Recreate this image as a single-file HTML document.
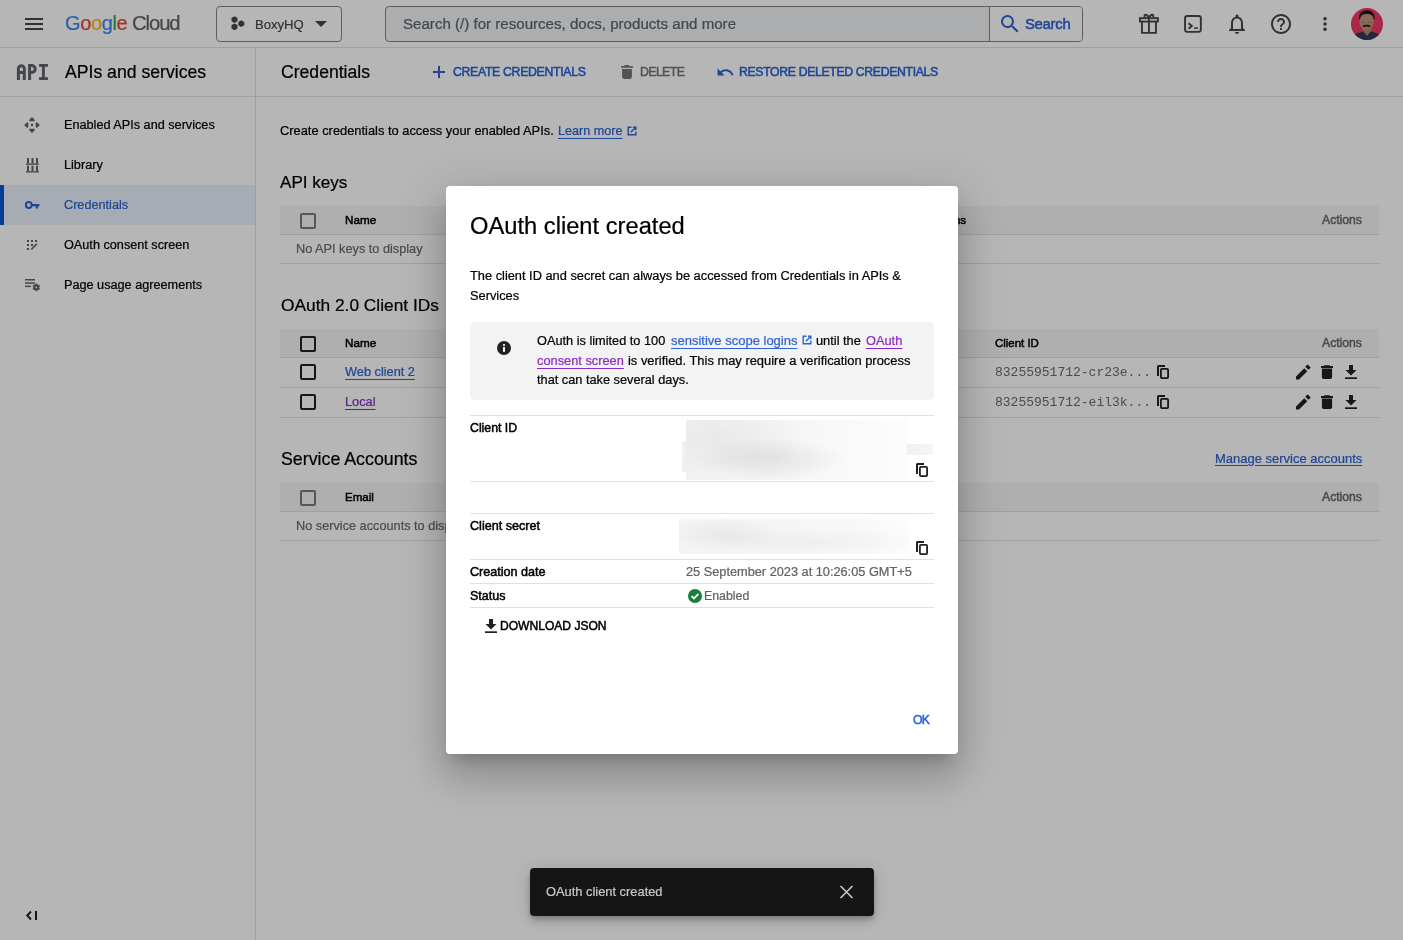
<!DOCTYPE html>
<html><head><meta charset="utf-8">
<style>
*{box-sizing:border-box;margin:0;padding:0}
html,body{width:1403px;height:940px;overflow:hidden;background:#fff;font-family:"Liberation Sans",sans-serif;color:#202124;position:relative}
.a{will-change:transform}
.n{-webkit-text-stroke:0.22px currentColor}
.m{-webkit-text-stroke:0.5px currentColor}
.a{position:absolute;white-space:nowrap}
svg.a{display:block;overflow:visible}
#ov{position:absolute;left:0;top:0;width:1403px;height:940px;background:rgba(0,0,0,0.285)}
</style></head><body>
<div class="a" style="left:0px;top:47px;width:1403px;height:1px;background:#e0e0e0;"></div>
<svg class="a" style="left:22px;top:12px;" width="24" height="24" viewBox="0 0 24 24"><path fill="#474747" d="M3 18h18v-2H3v2zm0-5h18v-2H3v2zm0-7v2h18V6H3z"/></svg>
<div class="a n" style="top:13.00px;font-size:20px;line-height:20px;color:#000;letter-spacing:-0.4px;left:65.30px;"><span style="color:#4285f4">G</span><span style="color:#ea4335">o</span><span style="color:#fbbc04">o</span><span style="color:#4285f4">g</span><span style="color:#34a853">l</span><span style="color:#ea4335">e</span></div>
<div class="a n" style="top:13.00px;font-size:20.3px;line-height:20.3px;color:#5f6368;letter-spacing:-1.1px;left:132.20px;">Cloud</div>
<div class="a" style="left:216px;top:6px;width:126px;height:36px;background:transparent;box-sizing:border-box;border:1px solid #80868b;border-radius:4px"></div>
<svg class="a" style="left:230px;top:15px;" width="16" height="16" viewBox="0 0 16 16"><g fill="#474747"><path d="M4.5 1.2l3 1.7v3.4l-3 1.7-3-1.7V2.9z"/><path d="M11.3 5.2l3 1.7v3.4l-3 1.7-3-1.7V6.9z"/><path d="M4.5 8.4l3 1.7v3.4l-3 1.7-3-1.7v-3.4z"/></g></svg>
<div class="a n" style="top:18.00px;font-size:13.05px;line-height:13.05px;color:#474747;left:255.40px;">BoxyHQ</div>
<svg class="a" style="left:315px;top:21px;" width="12" height="6" viewBox="0 0 12 6"><path d="M0 0h12L6 6z" fill="#474747"/></svg>
<div class="a" style="left:385px;top:6px;width:698px;height:36px;background:#f1f3f4;box-sizing:border-box;border:1px solid #80868b;border-radius:4px"></div>
<div class="a" style="left:989px;top:7px;width:93px;height:34px;background:#fff;border-left:1px solid #80868b;border-radius:0 3px 3px 0;box-sizing:border-box"></div>
<div class="a n" style="top:16.00px;font-size:15.1px;line-height:15.1px;color:#5f6368;left:403.00px;">Search (/) for resources, docs, products and more</div>
<svg class="a" style="left:998px;top:12px;" width="24" height="24" viewBox="0 0 24 24"><path fill="#2a62d2" d="M15.5 14h-.79l-.28-.27A6.471 6.471 0 0 0 16 9.5 6.5 6.5 0 1 0 9.5 16c1.61 0 3.09-.59 4.23-1.57l.27.28v.79l5 4.99L20.49 19l-4.99-5zm-6 0C7.01 14 5 11.99 5 9.5S7.01 5 9.5 5 14 7.01 14 9.5 11.99 14 9.5 14z"/></svg>
<div class="a m" style="top:17.00px;font-size:14.8px;line-height:14.8px;color:#2a62d2;letter-spacing:-0.25px;left:1024.60px;">Search</div>
<svg class="a" style="left:1134px;top:8px;" width="30" height="30" viewBox="0 0 30 30"><g fill="none" stroke="#474747" stroke-width="1.9"><rect x="5.95" y="10.15" width="17.9" height="3.4"/><path d="M7.95 13.5V24.85h14V13.5M14.95 10v14.8"/><path d="M14.95 10.1C13.2 5.5 9.6 5.8 10.7 9.6M14.95 10.1C16.7 5.5 20.3 5.8 19.2 9.6"/></g></svg>
<svg class="a" style="left:1134px;top:8px;" width="70" height="30" viewBox="0 0 70 30"><rect x="51.05" y="8.05" width="15.8" height="15.8" rx="2.3" fill="none" stroke="#474747" stroke-width="1.9"/><path d="M54.6 15.3l3.2 2.7-3.2 2.7" fill="none" stroke="#474747" stroke-width="1.9"/><rect x="60.1" y="19.3" width="3.7" height="1.6" fill="#474747"/></svg>
<svg class="a" style="left:1225px;top:12px;" width="24" height="24" viewBox="0 0 24 24"><path fill="#474747" d="M12 22c1.1 0 2-.9 2-2h-4c0 1.1.9 2 2 2zm6-6v-5c0-3.07-1.64-5.64-4.5-6.32V4c0-.83-.67-1.5-1.5-1.5s-1.5.67-1.5 1.5v.68C7.63 5.36 6 7.92 6 11v5l-2 2v1h16v-1l-2-2zm-2 1H8v-6c0-2.48 1.51-4.5 4-4.5s4 2.02 4 4.5v6z"/></svg>
<svg class="a" style="left:1269px;top:12px;" width="24" height="24" viewBox="0 0 24 24"><path fill="#474747" d="M11 18h2v-2h-2v2zm1-16C6.48 2 2 6.48 2 12s4.48 10 10 10 10-4.48 10-10S17.52 2 12 2zm0 18c-4.41 0-8-3.59-8-8s3.59-8 8-8 8 3.59 8 8-3.59 8-8 8zm0-14c-2.21 0-4 1.79-4 4h2c0-1.1.9-2 2-2s2 .9 2 2c0 2-3 1.75-3 5h2c0-2.25 3-2.5 3-5 0-2.21-1.79-4-4-4z"/></svg>
<svg class="a" style="left:1313px;top:12px;" width="24" height="24" viewBox="0 0 24 24"><g fill="#474747"><circle cx="12" cy="6.8" r="1.8"/><circle cx="12" cy="12" r="1.8"/><circle cx="12" cy="17.2" r="1.8"/></g></svg>
<svg class="a" style="left:1351px;top:8px;" width="32" height="32" viewBox="0 0 32 32"><defs><clipPath id="cav"><circle cx="16" cy="16" r="16"/></clipPath></defs><g clip-path="url(#cav)"><rect width="32" height="32" fill="#f23866"/><path d="M12 19h8l1 5-5 5-5-5z" fill="#b88a72"/><ellipse cx="15.6" cy="12.8" rx="7.3" ry="9.6" fill="#c2967e"/><path d="M8 11.5C7.6 5 10.8 2.2 15.8 2.2S24 5 23.6 11.5l-1.1-.6c-.3-3-2.2-4.8-6.6-4.8s-6.4 1.8-6.7 4.8z" fill="#1d1816"/><path d="M11.6 17.8c1.8-1.3 6.4-1.3 8 0l-.4 1.4c-1.8-.8-5.5-.8-7.2 0z" fill="#261c18"/><path d="M10.5 14.5h3.2M17.6 14.5h3.2" stroke="#8a6d60" stroke-width="0.8"/><path d="M1 33c0-5 4-8 8-8.5l3-1.5 4 5 4-5 3 1.5c4 .5 8 3.5 8 8.5z" fill="#303a52"/></g></svg>
<div class="a" style="left:0px;top:96px;width:1403px;height:1px;background:#e0e0e0;"></div>
<div class="a" style="left:255px;top:48px;width:1px;height:892px;background:#e0e0e0;"></div>
<svg class="a" style="left:0px;top:0px;" width="60" height="90" viewBox="0 0 60 90"><g fill="none" stroke="#5f6368" stroke-width="3"><path d="M18.4 80V68.6a2.95 2.95 0 0 1 5.9 0V80M18.4 72.5h5.9"/><path d="M29.6 80V65.5h2.1a3.5 3.5 0 0 1 0 7h-2.1"/></g><g fill="#5f6368"><rect x="39.1" y="64" width="8.8" height="2.8"/><rect x="42" y="64" width="2.8" height="16"/><rect x="39.1" y="77.2" width="8.8" height="2.8"/></g></svg>
<div class="a n" style="top:64.00px;font-size:17.64px;line-height:17.64px;color:#000;left:64.50px;">APIs and services</div>
<div class="a n" style="top:64.00px;font-size:17.6px;line-height:17.6px;color:#000;left:280.70px;">Credentials</div>
<svg class="a" style="left:433px;top:66px;" width="12" height="12" viewBox="0 0 12 12"><path d="M5 0h2v5h5v2H7v5H5V7H0V5h5z" fill="#2a62d2"/></svg>
<div class="a m" style="top:66.00px;font-size:12.3px;line-height:12.3px;color:#2a62d2;letter-spacing:-0.33px;left:452.50px;">CREATE CREDENTIALS</div>
<svg class="a" style="left:612px;top:60px;" width="30" height="24" viewBox="0 0 30 24"><g fill="#757575"><path d="M12.4 5h4.6v1.2h-4.6z"/><rect x="9.1" y="6.1" width="11.8" height="1.7"/><path d="M10.1 9.1h9.8v7.6c0 1.2-1 2.2-2.2 2.2h-5.4c-1.2 0-2.2-1-2.2-2.2z"/></g></svg>
<div class="a m" style="top:66.00px;font-size:12.3px;line-height:12.3px;color:#757575;letter-spacing:-0.6px;left:639.70px;">DELETE</div>
<svg class="a" style="left:716.4px;top:62.5px;" width="18.75" height="18.75" viewBox="0 0 24 24"><path fill="#2a62d2" d="M12.5 8c-2.65 0-5.05.99-6.9 2.6L2 7v9h9l-3.62-3.62c1.39-1.160 3.16-1.88 5.12-1.88 3.54 0 6.55 2.31 7.6 5.5l2.37-.78C21.08 11.03 17.15 8 12.5 8z"/></svg>
<div class="a m" style="top:66.00px;font-size:12.3px;line-height:12.3px;color:#2a62d2;letter-spacing:-0.37px;left:738.90px;">RESTORE DELETED CREDENTIALS</div>
<div class="a" style="left:0px;top:185px;width:255px;height:40px;background:#ebf0fc;"></div>
<div class="a" style="left:0px;top:185px;width:4px;height:40px;background:#0b57d0;"></div>
<svg class="a" style="left:24px;top:117px;" width="16" height="16" viewBox="0 0 16 16"><g fill="#5f6368"><path id="chv" d="M8 0.1L11.1 3.3 9.6 4.6 8 3.9 6.4 4.6 4.9 3.3z"/><use href="#chv" transform="rotate(90 8 8)"/><use href="#chv" transform="rotate(180 8 8)"/><use href="#chv" transform="rotate(270 8 8)"/><circle cx="8" cy="8" r="1.25"/></g></svg>
<svg class="a" style="left:26px;top:158px;" width="13" height="15" viewBox="0 0 13 15"><g fill="#5f6368"><rect x="1" y="0" width="2" height="5.5"/><rect x="5.5" y="0" width="2" height="5.5"/><rect x="10" y="0" width="2" height="5.5"/><rect x="0" y="5.5" width="13" height="1.3"/><rect x="1" y="7.7" width="2" height="5.5"/><rect x="5.5" y="7.7" width="2" height="5.5"/><rect x="10" y="7.7" width="2" height="5.5"/><rect x="0" y="13.2" width="13" height="1.3"/></g></svg>
<svg class="a" style="left:24px;top:199px;" width="16" height="12" viewBox="0 0 16 12"><circle cx="4.8" cy="6" r="2.9" fill="none" stroke="#2a62d2" stroke-width="2"/><path d="M7.5 5h8v2.2h-1.6v2.2h-2.2V7.2H7.5z" fill="#2a62d2"/></svg>
<svg class="a" style="left:26px;top:239px;" width="12" height="12" viewBox="0 0 12 12"><g fill="#5f6368"><rect x="1" y="1" width="2" height="2"/><rect x="5" y="1" width="2" height="2"/><rect x="9" y="1" width="2" height="2"/><rect x="1" y="5" width="2" height="2"/><rect x="5" y="5" width="2" height="2"/><rect x="1" y="9" width="2" height="2"/><path d="M10.3 4.3l1.1 1.1-5.5 5.5-1.1-1.1z"/></g></svg>
<svg class="a" style="left:24px;top:278px;" width="17" height="14" viewBox="0 0 17 14"><g fill="#5f6368"><rect x="1" y="1" width="10" height="1.5"/><rect x="1" y="4.3" width="10" height="1.5"/><rect x="1" y="7.6" width="6" height="1.5"/></g><g transform="translate(12.3 9.3)"><circle r="2.3" fill="none" stroke="#5f6368" stroke-width="1.6"/><g fill="#5f6368"><rect x="-0.8" y="-3.8" width="1.6" height="7.6"/><rect x="-0.8" y="-3.8" width="1.6" height="7.6" transform="rotate(60)"/><rect x="-0.8" y="-3.8" width="1.6" height="7.6" transform="rotate(120)"/></g><circle r="0.9" fill="#fff"/></g></svg>
<div class="a n" style="top:119.00px;font-size:12.68px;line-height:12.68px;color:#000;left:64.40px;">Enabled APIs and services</div>
<div class="a n" style="top:159.00px;font-size:12.68px;line-height:12.68px;color:#000;left:64.40px;">Library</div>
<div class="a n" style="top:199.00px;font-size:12.68px;line-height:12.68px;color:#2a62d2;left:64.40px;">Credentials</div>
<div class="a n" style="top:239.00px;font-size:12.68px;line-height:12.68px;color:#000;left:64.40px;">OAuth consent screen</div>
<div class="a n" style="top:279.00px;font-size:12.68px;line-height:12.68px;color:#000;left:64.40px;">Page usage agreements</div>
<svg class="a" style="left:26px;top:909px;" width="12" height="13" viewBox="0 0 12 13"><path d="M5 2.5L1.2 6.5 5 10.5" fill="none" stroke="#202124" stroke-width="1.9"/><rect x="9" y="2" width="2" height="9" fill="#202124"/></svg>
<div class="a n" style="top:125.00px;font-size:12.86px;line-height:12.86px;color:#000;left:280.30px;">Create credentials to access your enabled APIs.</div>
<div class="a n" style="top:125.00px;font-size:12.63px;line-height:12.63px;color:#2a62d2;left:558.00px;text-decoration:underline;text-underline-offset:3px">Learn more</div>
<svg class="a" style="left:626px;top:125px;" width="12" height="12" viewBox="0 0 12 12"><path d="M1.5 1.5h4v1.4H2.9v6.2h6.2V6.5h1.4v4H1.5z" fill="#2a62d2"/><path d="M7 1.5h3.5V5H9.1V3.9L5.3 7.7l-1-1 3.8-3.8H7z" fill="#2a62d2"/></svg>
<div class="a n" style="top:174.00px;font-size:17.08px;line-height:17.08px;color:#000;left:280.30px;">API keys</div>
<div class="a" style="left:280px;top:206px;width:1099px;height:28px;background:#f5f5f5;"></div>
<div class="a" style="left:280px;top:234px;width:1099px;height:1px;background:#e0e0e0;"></div>
<div class="a" style="left:280px;top:263px;width:1099px;height:1px;background:#e0e0e0;"></div>
<div class="a" style="left:300px;top:213px;width:16px;height:16px;background:transparent;box-sizing:border-box;border:2px solid #7a7a7a;border-radius:2px"></div>
<div class="a m" style="top:214.00px;font-size:11.7px;line-height:11.7px;color:#000;left:344.50px;">Name</div>
<div class="a m" style="top:215.00px;font-size:11.5px;line-height:11.5px;color:#000;right:437.00px;">Restrictions</div>
<div class="a m" style="top:214.00px;font-size:12.2px;line-height:12.2px;color:#6b6b6b;right:40.60px;">Actions</div>
<div class="a n" style="top:243.00px;font-size:12.73px;line-height:12.73px;color:#6b6b6b;left:296.40px;">No API keys to display</div>
<div class="a n" style="top:297.00px;font-size:17.34px;line-height:17.34px;color:#000;left:280.70px;">OAuth 2.0 Client IDs</div>
<div class="a" style="left:280px;top:329px;width:1099px;height:28px;background:#f5f5f5;"></div>
<div class="a" style="left:280px;top:357px;width:1099px;height:1px;background:#e0e0e0;"></div>
<div class="a" style="left:280px;top:387px;width:1099px;height:1px;background:#e0e0e0;"></div>
<div class="a" style="left:280px;top:417px;width:1099px;height:1px;background:#e0e0e0;"></div>
<div class="a" style="left:300px;top:336px;width:16px;height:16px;background:transparent;box-sizing:border-box;border:2px solid #202124;border-radius:2px"></div>
<div class="a" style="left:300px;top:364px;width:16px;height:16px;background:transparent;box-sizing:border-box;border:2px solid #202124;border-radius:2px"></div>
<div class="a" style="left:300px;top:394px;width:16px;height:16px;background:transparent;box-sizing:border-box;border:2px solid #202124;border-radius:2px"></div>
<div class="a m" style="top:337.00px;font-size:11.7px;line-height:11.7px;color:#000;left:344.50px;">Name</div>
<div class="a m" style="top:338.00px;font-size:11.45px;line-height:11.45px;color:#000;left:995.30px;">Client ID</div>
<div class="a m" style="top:337.00px;font-size:12.2px;line-height:12.2px;color:#6b6b6b;right:40.60px;">Actions</div>
<div class="a n" style="top:366.00px;font-size:12.76px;line-height:12.76px;color:#2a62d2;left:344.50px;text-decoration:underline;text-underline-offset:3px">Web client 2</div>
<div class="a n" style="top:396.00px;font-size:12.76px;line-height:12.76px;color:#8a2bc2;left:344.50px;text-decoration:underline;text-underline-offset:3px">Local</div>
<div class="a" style="top:366.00px;font-size:13.0px;line-height:13.0px;color:#6b6b6b;font-family:'Liberation Mono',monospace;left:995.30px;">83255951712-cr23e...</div>
<div class="a" style="top:396.00px;font-size:13.0px;line-height:13.0px;color:#6b6b6b;font-family:'Liberation Mono',monospace;left:995.30px;">83255951712-eil3k...</div>
<svg class="a" style="left:1156px;top:365px;" width="13" height="14" viewBox="0 0 13 14"><path d="M1 1.5C1 .7 1.7 0 2.5 0H9v2H3v9H1z" fill="#202124"/><rect x="4.9" y="3.9" width="7.2" height="9.2" rx="1" fill="none" stroke="#202124" stroke-width="1.8"/></svg>
<svg class="a" style="left:1156px;top:395px;" width="13" height="14" viewBox="0 0 13 14"><path d="M1 1.5C1 .7 1.7 0 2.5 0H9v2H3v9H1z" fill="#202124"/><rect x="4.9" y="3.9" width="7.2" height="9.2" rx="1" fill="none" stroke="#202124" stroke-width="1.8"/></svg>
<svg class="a" style="left:1296px;top:365px;" width="15" height="15" viewBox="0 0 15 15"><path d="M0 11.5V14.5h3L11.3 6.2l-3-3zM14.2 3.3c.4-.4.4-1 0-1.4L12.3.1c-.4-.4-1-.4-1.4 0L9.3 1.7l3 3z" fill="#202124"/></svg>
<svg class="a" style="left:1321px;top:365px;" width="12" height="14" viewBox="0 0 12 14"><path d="M3.5 0.3h5l.8.8H12v1.8H0V1.1h2.7z" fill="#202124"/><path d="M.9 3.6h10.2v8.3c0 1.2-.9 2.1-2.1 2.1H3c-1.2 0-2.1-.9-2.1-2.1z" fill="#202124"/></svg>
<svg class="a" style="left:1345px;top:365px;" width="12" height="14" viewBox="0 0 12 14"><path d="M4 0h4v5h3.5L6 10.5.5 5H4z" fill="#202124"/><rect x="0" y="12.3" width="12" height="1.7" fill="#202124"/></svg>
<svg class="a" style="left:1296px;top:394.7px;" width="15" height="15" viewBox="0 0 15 15"><path d="M0 11.5V14.5h3L11.3 6.2l-3-3zM14.2 3.3c.4-.4.4-1 0-1.4L12.3.1c-.4-.4-1-.4-1.4 0L9.3 1.7l3 3z" fill="#202124"/></svg>
<svg class="a" style="left:1321px;top:394.7px;" width="12" height="14" viewBox="0 0 12 14"><path d="M3.5 0.3h5l.8.8H12v1.8H0V1.1h2.7z" fill="#202124"/><path d="M.9 3.6h10.2v8.3c0 1.2-.9 2.1-2.1 2.1H3c-1.2 0-2.1-.9-2.1-2.1z" fill="#202124"/></svg>
<svg class="a" style="left:1345px;top:394.7px;" width="12" height="14" viewBox="0 0 12 14"><path d="M4 0h4v5h3.5L6 10.5.5 5H4z" fill="#202124"/><rect x="0" y="12.3" width="12" height="1.7" fill="#202124"/></svg>
<div class="a n" style="top:451.00px;font-size:17.8px;line-height:17.8px;color:#000;left:280.50px;">Service Accounts</div>
<div class="a n" style="top:452.00px;font-size:12.99px;line-height:12.99px;color:#2a62d2;right:40.30px;text-decoration:underline;text-underline-offset:2px">Manage service accounts</div>
<div class="a" style="left:280px;top:483px;width:1099px;height:28px;background:#f5f5f5;"></div>
<div class="a" style="left:280px;top:511px;width:1099px;height:1px;background:#e0e0e0;"></div>
<div class="a" style="left:280px;top:540px;width:1099px;height:1px;background:#e0e0e0;"></div>
<div class="a" style="left:300px;top:490px;width:16px;height:16px;background:transparent;box-sizing:border-box;border:2px solid #7a7a7a;border-radius:2px"></div>
<div class="a m" style="top:492.00px;font-size:11.56px;line-height:11.56px;color:#000;left:344.50px;">Email</div>
<div class="a m" style="top:491.00px;font-size:12.2px;line-height:12.2px;color:#6b6b6b;right:40.60px;">Actions</div>
<div class="a n" style="top:520.00px;font-size:12.73px;line-height:12.73px;color:#6b6b6b;left:296.40px;">No service accounts to display</div>
<div id="ov"></div>
<div class="a" style="left:446px;top:186px;width:512px;height:568px;background:#fff;border-radius:4px;box-shadow:0 11px 15px -7px rgba(0,0,0,.2),0 24px 38px 3px rgba(0,0,0,.14),0 9px 46px 8px rgba(0,0,0,.12)"></div>
<div class="a n" style="top:215.00px;font-size:23.71px;line-height:23.71px;color:#000;left:470.20px;">OAuth client created</div>
<div class="a n" style="top:270.00px;font-size:12.82px;line-height:12.82px;color:#000;left:470.20px;">The client ID and secret can always be accessed from Credentials in APIs &amp;</div>
<div class="a n" style="top:290.00px;font-size:12.82px;line-height:12.82px;color:#000;left:470.20px;">Services</div>
<div class="a" style="left:470px;top:322px;width:464px;height:78px;background:#f3f3f3;border-radius:5px"></div>
<svg class="a" style="left:497px;top:341px;" width="14" height="14" viewBox="0 0 14 14"><circle cx="7" cy="7" r="7" fill="#202124"/><rect x="6" y="6" width="2" height="4.8" fill="#fff"/><circle cx="7" cy="4" r="1.1" fill="#fff"/></svg>
<div class="a n" style="top:335.00px;font-size:12.75px;line-height:12.75px;color:#000;left:537.00px;">OAuth is limited to 100 </div>
<div class="a n" style="top:334.00px;font-size:13.0px;line-height:13.0px;color:#2d63d8;left:671.00px;text-decoration:underline;text-underline-offset:3px">sensitive scope logins</div>
<svg class="a" style="left:801px;top:334px;" width="12" height="12" viewBox="0 0 12 12"><path d="M1.5 1.5h4v1.4H2.9v6.2h6.2V6.5h1.4v4H1.5z" fill="#2d63d8"/><path d="M7 1.5h3.5V5H9.1V3.9L5.3 7.7l-1-1 3.8-3.8H7z" fill="#2d63d8"/></svg>
<div class="a n" style="top:335.00px;font-size:12.8px;line-height:12.8px;color:#000;left:816.30px;">until the</div>
<div class="a n" style="top:335.00px;font-size:12.8px;line-height:12.8px;color:#8a2bc2;left:866.00px;text-decoration:underline;text-underline-offset:3px">OAuth</div>
<div class="a n" style="top:355.00px;font-size:12.8px;line-height:12.8px;color:#8a2bc2;left:537.00px;text-decoration:underline;text-underline-offset:3px">consent screen</div>
<div class="a n" style="top:355.00px;font-size:12.92px;line-height:12.92px;color:#000;left:628.00px;">is verified. This may require a verification process</div>
<div class="a n" style="top:374.00px;font-size:12.75px;line-height:12.75px;color:#000;left:537.00px;">that can take several days.</div>
<div class="a" style="left:470px;top:415px;width:464px;height:1px;background:#e0e0e0;"></div>
<div class="a" style="left:470px;top:481px;width:464px;height:1px;background:#e0e0e0;"></div>
<div class="a" style="left:470px;top:513px;width:464px;height:1px;background:#e0e0e0;"></div>
<div class="a" style="left:470px;top:559px;width:464px;height:1px;background:#e0e0e0;"></div>
<div class="a" style="left:470px;top:583px;width:464px;height:1px;background:#e0e0e0;"></div>
<div class="a" style="left:470px;top:607px;width:464px;height:1px;background:#e0e0e0;"></div>
<div class="a m" style="top:422.00px;font-size:12.3px;line-height:12.3px;color:#000;left:470.00px;">Client ID</div>
<div class="a" style="left:682px;top:441px;width:5px;height:31px;background:linear-gradient(90deg,#f3f3f3,#ececec);"></div>
<div class="a" style="left:907px;top:444px;width:26px;height:11px;background:linear-gradient(90deg,#f0f0f0,#f6f6f6);"></div>
<div class="a" style="left:686px;top:420px;width:221px;height:60px;background:radial-gradient(ellipse 35% 35% at 38% 65%,rgba(0,0,0,.07) 0%,rgba(0,0,0,.04) 50%,rgba(0,0,0,0) 100%),radial-gradient(ellipse 40% 60% at 15% 30%,rgba(0,0,0,.04) 0%,rgba(0,0,0,0) 100%),linear-gradient(90deg,#f1f1f1 0%,#f4f4f4 40%,#fafafa 75%,#fcfcfc 100%);"></div>
<svg class="a" style="left:915px;top:463px;" width="13" height="14" viewBox="0 0 13 14"><path d="M1 1.5C1 .7 1.7 0 2.5 0H9v2H3v9H1z" fill="#202124"/><rect x="4.9" y="3.9" width="7.2" height="9.2" rx="1" fill="none" stroke="#202124" stroke-width="1.8"/></svg>
<div class="a m" style="top:520.00px;font-size:12.6px;line-height:12.6px;color:#000;left:470.00px;">Client secret</div>
<div class="a" style="left:679px;top:519px;width:230px;height:35px;background:radial-gradient(ellipse 25% 50% at 20% 45%,rgba(0,0,0,.05) 0%,rgba(0,0,0,0) 100%),radial-gradient(ellipse 50% 40% at 60% 65%,rgba(0,0,0,.03) 0%,rgba(0,0,0,0) 100%),linear-gradient(90deg,#f4f4f4 0%,#f5f5f5 40%,#f8f8f8 80%,#fcfcfc 100%);"></div>
<svg class="a" style="left:915px;top:541px;" width="13" height="14" viewBox="0 0 13 14"><path d="M1 1.5C1 .7 1.7 0 2.5 0H9v2H3v9H1z" fill="#202124"/><rect x="4.9" y="3.9" width="7.2" height="9.2" rx="1" fill="none" stroke="#202124" stroke-width="1.8"/></svg>
<div class="a m" style="top:566.00px;font-size:12.6px;line-height:12.6px;color:#000;left:470.00px;">Creation date</div>
<div class="a n" style="top:566.00px;font-size:12.76px;line-height:12.76px;color:#5f6368;left:686.00px;">25 September 2023 at 10:26:05 GMT+5</div>
<div class="a m" style="top:590.00px;font-size:12.5px;line-height:12.5px;color:#000;left:470.00px;">Status</div>
<svg class="a" style="left:688px;top:589px;" width="14" height="14" viewBox="0 0 14 14"><circle cx="7" cy="7" r="7" fill="#188038"/><path d="M3.6 7.2l2.3 2.3 4.6-4.6" fill="none" stroke="#fff" stroke-width="1.8"/></svg>
<div class="a n" style="top:590.00px;font-size:12.37px;line-height:12.37px;color:#5f6368;left:704.00px;">Enabled</div>
<svg class="a" style="left:485px;top:619px;" width="12" height="14" viewBox="0 0 12 14"><path d="M4 0h4v5h3.5L6 10.5.5 5H4z" fill="#202124"/><rect x="0" y="12.3" width="12" height="1.7" fill="#202124"/></svg>
<div class="a m" style="top:620.00px;font-size:12.07px;line-height:12.07px;color:#000;left:499.70px;">DOWNLOAD JSON</div>
<div class="a m" style="top:714.00px;font-size:12.3px;line-height:12.3px;color:#2d63d8;letter-spacing:-0.8px;left:912.50px;">OK</div>
<div class="a" style="left:530px;top:868px;width:344px;height:48px;background:#151515;border-radius:4px;box-shadow:0 3px 5px -1px rgba(0,0,0,.2),0 6px 10px 0 rgba(0,0,0,.14),0 1px 18px 0 rgba(0,0,0,.12)"></div>
<div class="a n" style="top:886.00px;font-size:12.87px;line-height:12.87px;color:#c8c8c8;left:545.80px;">OAuth client created</div>
<svg class="a" style="left:839px;top:885px;" width="15" height="14" viewBox="0 0 15 14"><path d="M1.5 1l12 12M13.5 1l-12 12" stroke="#c8c8c8" stroke-width="1.6"/></svg>
</body></html>
